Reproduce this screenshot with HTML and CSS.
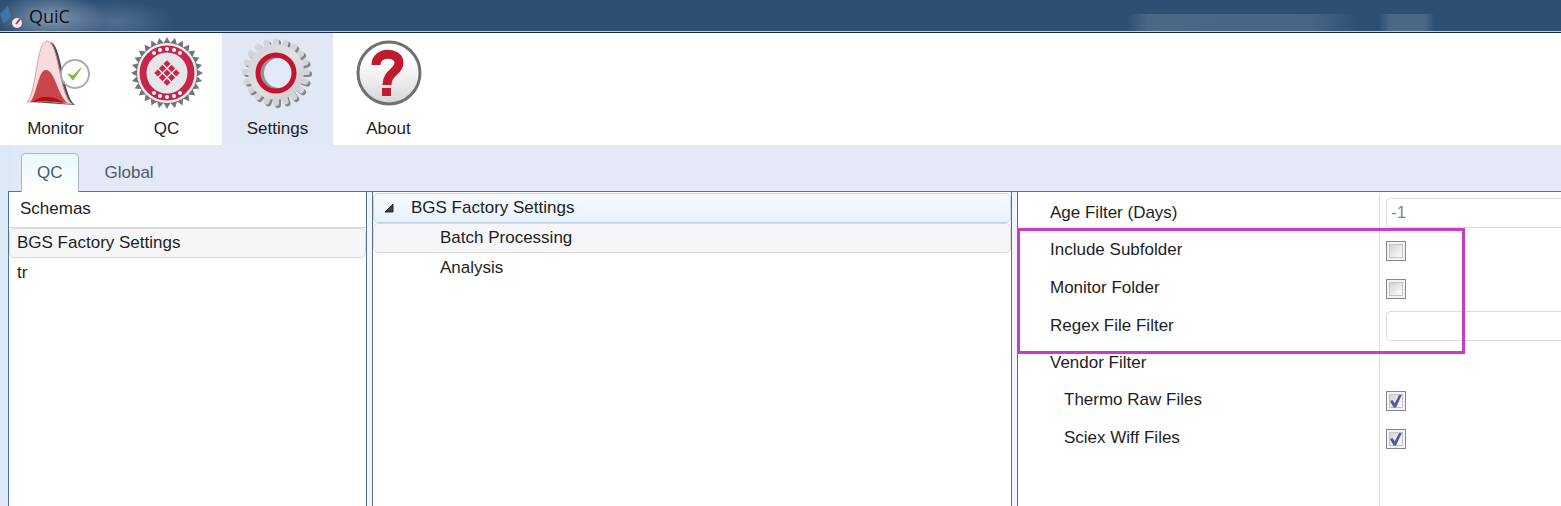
FILE: index.html
```html
<!DOCTYPE html>
<html lang="en">
  <head>
    <meta charset="UTF-8" />
    <meta name="viewport" content="width=device-width, initial-scale=1.0" />
    <title>QuiC</title>
    <link rel="stylesheet" href="styles.css">
  </head>
  <body>
    <header class="titlebar">
      <svg class="app-icon" viewBox="0 0 24 24" aria-hidden="true">
        <path d="M0 10 L8 2 L11 12 L4 20 Z" fill="#3f83b8" opacity=".7" />
        <circle cx="17" cy="19" r="5" fill="#f3eef1" />
        <path d="M16 20 L20 15" stroke="#c8304a" stroke-width="2" />
      </svg>
      <span>QuiC</span>
    </header>

    <nav class="toolbar">
      <button class="tool">
        <svg viewBox="0 0 72 72" aria-hidden="true">
          <path d="M10 65 C20 58 20 4 30 5 C42 6 42 58 55 68 Z" fill="#4c4c50" />
          <path d="M7 65 C17 56 16 4 27 4 C39 4 39 58 52 67 Q30 63 7 65 Z" fill="#f8dbdf" stroke="#dda0a6" />
          <path d="M10 65 C17 58 18 33 26 33 C35 33 38 60 48 66 Q28 63 10 65 Z" fill="#cb464b" />
          <path d="M12 65 Q27 54 44 66 Q28 63 12 65 Z" fill="#b80d12" />
          <circle cx="55" cy="37" r="14" fill="#fff" stroke="#aaa" stroke-width="2" />
          <path d="M48 37 L53 43 L61 31 L53 39 Z" fill="#83b63c" stroke="#83b63c" />
        </svg>
        <span>Monitor</span>
      </button>
      <button class="tool">
        <svg viewBox="0 0 72 72" aria-hidden="true">
          <defs>
            <polygon id="spike" points="36,0 40,7 40,65 36,72 32,65 32,7" />
          </defs>
          <g fill="#6f7679">
            <use href="#spike" />
            <use href="#spike" transform="rotate(12.86 36 36)" />
            <use href="#spike" transform="rotate(25.71 36 36)" />
            <use href="#spike" transform="rotate(38.57 36 36)" />
            <use href="#spike" transform="rotate(51.43 36 36)" />
            <use href="#spike" transform="rotate(64.29 36 36)" />
            <use href="#spike" transform="rotate(77.14 36 36)" />
            <use href="#spike" transform="rotate(90 36 36)" />
            <use href="#spike" transform="rotate(102.86 36 36)" />
            <use href="#spike" transform="rotate(115.71 36 36)" />
            <use href="#spike" transform="rotate(128.57 36 36)" />
            <use href="#spike" transform="rotate(141.43 36 36)" />
            <use href="#spike" transform="rotate(154.29 36 36)" />
            <use href="#spike" transform="rotate(167.14 36 36)" />
          </g>
          <circle cx="36" cy="36" r="30" fill="#ececec" />
          <circle cx="36" cy="36" r="24" fill="#e6e6e8" stroke="#c9254a" stroke-width="7" />
          <g fill="#fff">
            <circle cx="23" cy="16" r="2" />
            <circle cx="29" cy="13" r="2" />
            <circle cx="36" cy="12" r="2" />
            <circle cx="43" cy="13" r="2" />
            <circle cx="49" cy="16" r="2" />
            <circle cx="23" cy="56" r="2" />
            <circle cx="29" cy="59" r="2" />
            <circle cx="36" cy="60" r="2" />
            <circle cx="43" cy="59" r="2" />
            <circle cx="49" cy="56" r="2" />
          </g>
          <g fill="#c9254a" transform="rotate(45 36 36)">
            <rect x="27" y="27" width="5" height="5" />
            <rect x="33.5" y="27" width="5" height="5" />
            <rect x="40" y="27" width="5" height="5" />
            <rect x="27" y="33.5" width="5" height="5" />
            <rect x="33.5" y="33.5" width="5" height="5" />
            <rect x="40" y="33.5" width="5" height="5" />
            <rect x="27" y="40" width="5" height="5" />
            <rect x="33.5" y="40" width="5" height="5" />
            <rect x="40" y="40" width="5" height="5" />
          </g>
        </svg>
        <span>QC</span>
      </button>
      <button class="tool tool-active">
        <svg viewBox="0 0 72 72" aria-hidden="true">
          <defs>
            <linearGradient id="metal" x1="0" y1="0" x2="1" y2="1">
              <stop offset="0" stop-color="#cfd1d5" />
              <stop offset=".5" stop-color="#e2e2e4" />
              <stop offset="1" stop-color="#c6c7ca" />
            </linearGradient>
            <rect id="tooth" x="31" y="1" width="6" height="68" rx="3" />
            <g id="teeth">
              <use href="#tooth" />
              <use href="#tooth" transform="rotate(18 34 35)" />
              <use href="#tooth" transform="rotate(36 34 35)" />
              <use href="#tooth" transform="rotate(54 34 35)" />
              <use href="#tooth" transform="rotate(72 34 35)" />
              <use href="#tooth" transform="rotate(90 34 35)" />
              <use href="#tooth" transform="rotate(108 34 35)" />
              <use href="#tooth" transform="rotate(126 34 35)" />
              <use href="#tooth" transform="rotate(144 34 35)" />
              <use href="#tooth" transform="rotate(162 34 35)" />
            </g>
          </defs>
          <use href="#teeth" x="2" y="2" fill="#85878b" />
          <use href="#teeth" fill="#d3d4d7" />
          <circle cx="34" cy="35" r="28" fill="url(#metal)" />
          <circle cx="34" cy="36" r="18" fill="#8f9296" />
          <circle cx="37" cy="36" r="15" fill="#e3e9f6" />
          <circle cx="34" cy="36" r="18" fill="none" stroke="#c4142f" stroke-width="5" />
        </svg>
        <span>Settings</span>
      </button>
      <button class="tool">
        <svg viewBox="0 0 72 72" aria-hidden="true">
          <defs>
            <linearGradient id="glass" x1="0" y1="0" x2="0" y2="1">
              <stop offset=".3" stop-color="#fff" />
              <stop offset="1" stop-color="#d5d5d8" />
            </linearGradient>
          </defs>
          <circle cx="36" cy="36" r="31" fill="url(#glass)" stroke="#707073" stroke-width="3" />
          <path d="M23 28 C23 14 46 14 46 26 C46 35 34 35 34 48" fill="none" stroke="#c01a2e" stroke-width="9" />
          <rect x="29" y="51" width="9" height="8" fill="#c01a2e" />
        </svg>
        <span>About</span>
      </button>
    </nav>

    <main class="workspace">
      <div class="tabs">
        <button class="tab tab-active">QC</button>
        <button class="tab">Global</button>
      </div>

      <div class="panes">
        <section class="pane schemas">
          <h2>Schemas</h2>
          <ul>
            <li class="selected">BGS Factory Settings</li>
            <li>tr</li>
          </ul>
        </section>

        <section class="pane tree">
          <ul>
            <li class="tree-root">
              <svg viewBox="0 0 10 10" aria-hidden="true">
                <path d="M9 1 V9 H1 Z" fill="#404048" stroke="#26262c" />
              </svg>
              BGS Factory Settings
            </li>
            <li class="tree-child selected">Batch Processing</li>
            <li class="tree-child">Analysis</li>
          </ul>
        </section>

        <form class="pane properties">
          <div class="row">
            <label for="age">Age Filter (Days)</label>
            <div class="field"><input type="text" id="age" value="-1" /></div>
          </div>
          <div class="highlighted">
            <div class="row row-check">
              <label for="subfolder">Include Subfolder</label>
              <div class="field"><input type="checkbox" id="subfolder" /></div>
            </div>
            <div class="row row-check">
              <label for="monitor">Monitor Folder</label>
              <div class="field"><input type="checkbox" id="monitor" /></div>
            </div>
            <div class="row">
              <label for="regex">Regex File Filter</label>
              <div class="field"><input type="text" id="regex" /></div>
            </div>
            <div class="marker"></div>
          </div>
          <div class="row">
            <span class="label">Vendor Filter</span>
          </div>
          <div class="row row-check row-sub">
            <label for="thermo">Thermo Raw Files</label>
            <div class="field"><input type="checkbox" id="thermo" checked /></div>
          </div>
          <div class="row row-check row-sub">
            <label for="sciex">Sciex Wiff Files</label>
            <div class="field"><input type="checkbox" id="sciex" checked /></div>
          </div>
          <div class="row row-fill"><span class="label"></span></div>
        </form>
      </div>
    </main>
  </body>
</html>
```
FILE: styles.css
```css
* {
  box-sizing: border-box;
}
body {
  margin: 0;
  min-height: 100vh;
  display: flex;
  flex-direction: column;
  font-family: 'Liberation Sans', Arial, sans-serif;
  font-size: 17px;
  line-height: 20px;
  color: #1e1e1e;
  background-color: #fff;
}
button,
input {
  font: inherit;
  color: inherit;
}
ul {
  list-style: none;
  margin: 0;
  padding: 0;
}

/* Title bar */
.titlebar {
  display: flex;
  align-items: center;
  gap: 5px;
  height: 33px;
  border-bottom: 1px solid #1d2c40;
  box-shadow: inset 0 -1px #c3ccd8;
  background:
    radial-gradient(ellipse 55px 26px at 50px 18px, rgba(190, 200, 215, 0.6), transparent),
    radial-gradient(ellipse 60px 22px at 115px 22px, rgba(150, 170, 195, 0.35), transparent),
    linear-gradient(90deg, transparent, rgba(130, 150, 170, 0.35) 10%, rgba(130, 150, 170, 0.3) 80%, transparent)
      right 203px bottom / 232px 18px no-repeat,
    linear-gradient(90deg, transparent, rgba(130, 150, 170, 0.35) 20% 80%, transparent)
      right 126px bottom / 56px 18px no-repeat,
    #2d4f74;
  font-family: 'Open Sans', 'Noto Sans', sans-serif;
  font-size: 18px;
  color: #0b0f16;
}
.app-icon {
  width: 24px;
  height: 24px;
}

/* Toolbar */
.toolbar {
  display: flex;
}
.tool {
  display: flex;
  flex-direction: column;
  align-items: center;
  gap: 10px;
  width: 111px;
  padding: 4px 0 6px;
  border: none;
  background: none;
}
.tool svg {
  width: 72px;
  height: 72px;
}
.tool-active {
  background-color: #e1e8f5;
}

/* Tabs */
.workspace {
  flex: 1;
  display: flex;
  flex-direction: column;
  padding: 8px 0 0 8px;
  background: linear-gradient(90deg, #dce8f5, #e4e9f5 30px);
}
.tabs {
  display: flex;
  padding-left: 13px;
}
.tab {
  height: 38px;
  padding: 0 16px;
  border: 1px solid transparent;
  border-bottom: none;
  border-radius: 5px 5px 0 0;
  background: none;
  color: #4c5a70;
}
.tab + .tab {
  margin-left: 9px;
}
.tab-active {
  position: relative;
  z-index: 1;
  margin-bottom: -1px;
  height: 39px;
  padding: 0 15px;
  border-color: #a3b9c9;
  background: linear-gradient(#e9f8fc, #fff);
}

/* Panes */
.panes {
  flex: 1;
  display: grid;
  grid-template-columns: 359px 640px 1fr;
  gap: 5px;
  border-top: 1px solid #56719a;
  background-color: #f1f5fb;
}
.pane {
  padding-top: 1px;
  border: 1px solid #56719a;
  border-width: 0 1px;
  background-color: #fff;
}
.pane li {
  display: flex;
  align-items: center;
  height: 30px;
  padding: 0 7px;
  border: 1px solid transparent;
  border-radius: 5px;
}
.pane .selected {
  border-color: #d9d9de;
  background-color: #f6f6f9;
}
.schemas h2 {
  margin: 0;
  padding: 6px 11px 8px;
  border-bottom: 1px solid #d9d9de;
  font-size: 17px;
  font-weight: normal;
}
.tree-root svg {
  width: 10px;
  height: 10px;
  margin: 0 17px 0 3px;
}
.pane .tree-root {
  border-color: #bfd3ec;
  background: linear-gradient(#f7fbff, #e8f1fc);
}
.pane .tree-child {
  padding-left: 66px;
}

/* Properties */
.properties {
  display: flex;
  flex-direction: column;
  border-right: none;
  padding-top: 2px;
}
.row {
  display: flex;
  height: 37px;
}
.row-check {
  height: 38px;
}
.row-fill {
  flex: 1;
}
.row label,
.row .label {
  display: flex;
  align-items: center;
  width: 362px;
  padding-left: 32px;
  border-right: 1px solid #dcdce2;
}
.row-sub label {
  padding-left: 46px;
}
.field {
  flex: 1;
  display: flex;
  align-items: center;
  padding-left: 6px;
}
.field input[type='text'] {
  width: 100%;
  height: 30px;
  padding: 0 4px;
  border: 1px solid #dcdce2;
  border-right: none;
  border-radius: 5px 0 0 5px;
  background-color: #fff;
  color: #86868c;
}
.field input[type='checkbox'] {
  appearance: none;
  width: 20px;
  height: 20px;
  margin: 2px 0 0;
  border: 1px solid #85858a;
  box-shadow: inset 0 0 0 2px #f4f4f4, inset 0 0 0 3px #c3c3c8;
  background: linear-gradient(135deg, #c9c9ce, #f8f8f8 75%);
}
.field input[type='checkbox']:checked {
  display: grid;
  place-items: center;
}
.field input[type='checkbox']:checked::before {
  content: '';
  width: 12px;
  height: 13px;
  background-color: #4d5aa0;
  clip-path: polygon(0 50%, 20% 42%, 40% 68%, 78% 0, 100% 0, 50% 100%, 30% 100%);
}
.highlighted {
  position: relative;
}
/* callout frame drawn over the three folder rows */
.marker {
  position: absolute;
  top: -3px;
  bottom: -10px;
  left: -1px;
  width: 448px;
  border: 3px solid #c93bc6;
  pointer-events: none;
}
```
